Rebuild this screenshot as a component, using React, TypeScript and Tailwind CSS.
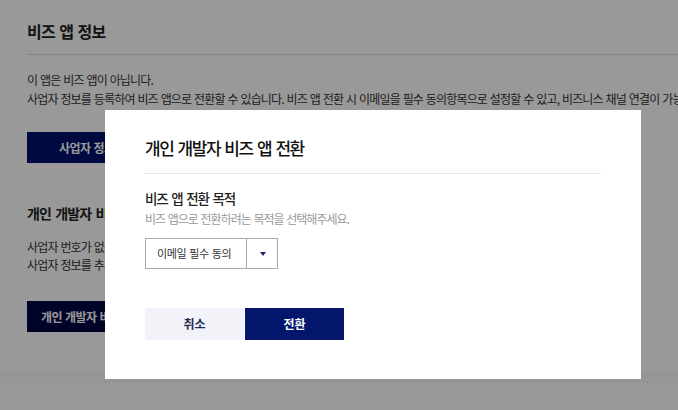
import React from "react";

const font = { fontFamily: '"Noto Sans CJK KR", "Noto Sans", sans-serif' };

export default function App() {
  return (
    <div
      className="relative w-[678px] h-[410px] overflow-hidden bg-white text-[#333]"
      style={font}
    >
      {/* Page */}
      <div className="flex flex-col h-[372px] pl-[27px] pt-[19px] whitespace-nowrap">
        <h2 className="text-[16px] leading-[24px] font-bold text-[#222] tracking-[-0.6px] [word-spacing:1px]">비즈 앱 정보</h2>
        <div className="mt-[11px] h-px bg-[#dcdcdc]" />
        <p className="mt-[15px] text-[12px] leading-[19px] tracking-[-0.85px] [word-spacing:1px]">이 앱은 비즈 앱이 아닙니다.</p>
        <p className="text-[12px] leading-[19px] tracking-[-0.85px] [word-spacing:1px]">
          사업자 정보를 등록하여 비즈 앱으로 전환할 수 있습니다. 비즈 앱 전환 시 이메일을 필수 동의항목으로 설정할 수 있고, 비즈니스 채널 연결이 가능합니다.
        </p>
        <div className="mt-[24px] flex">
          <button className="h-[31px] px-[32px] bg-[#00106b] text-white text-[12px] font-bold tracking-[-0.6px] [word-spacing:1px]">
            사업자 정보 등록
          </button>
        </div>
        <h3 className="mt-[40px] text-[14px] leading-[20px] font-bold text-[#222] tracking-[-0.9px] [word-spacing:2px]">개인 개발자 비즈 앱 전환</h3>
        <p className="mt-[15px] text-[12px] leading-[18px] tracking-[-0.85px] [word-spacing:1px]">사업자 번호가 없는 개인 개발자도 비즈 앱으로 전환할 수 있습니다.</p>
        <p className="text-[12px] leading-[18px] tracking-[-0.85px] [word-spacing:1px]">사업자 정보를 추후 등록하면 비즈니스 기능을 이용할 수 있습니다.</p>
        <div className="mt-[27px] flex">
          <button className="h-[31px] px-[14px] bg-[#000443] text-white text-[12px] font-bold tracking-[-0.6px] [word-spacing:1px]">
            개인 개발자 비즈 앱 전환
          </button>
        </div>
      </div>
      <div className="h-[11px] bg-[#f7f8f7]" />

      {/* Overlay */}
      <div className="absolute inset-0 bg-black/40" />

      {/* Modal */}
      <div className="absolute left-[105px] top-[110px] w-[536px] h-[269px] bg-white px-[40px] pt-[26px]">
        <div className="pb-[13px] border-b border-[#e5e5e5]">
          <h1 className="text-[17px] leading-[24px] font-medium text-[#111] tracking-[-1.5px] [word-spacing:2px]">개인 개발자 비즈 앱 전환</h1>
        </div>
        <h4 className="mt-[14px] text-[13.5px] leading-[20px] font-medium text-[#222] tracking-[-1.2px] [word-spacing:2px]">비즈 앱 전환 목적</h4>
        <p className="mt-[2px] text-[12px] leading-[18px] text-[#999] tracking-[-1px] [word-spacing:1px]">비즈 앱으로 전환하려는 목적을 선택해주세요.</p>
        <div className="mt-[10px] flex w-[133px] h-[31px] border border-[#a8a8a8]">
          <div className="flex-1 flex items-center pl-[11px] text-[11px] text-[#333] tracking-[-0.4px] [word-spacing:1px]">이메일 필수 동의</div>
          <div className="w-[31px] border-l border-[#a8a8a8] flex items-center justify-center">
            <svg width="6" height="4" viewBox="0 0 6 4" className="ml-[1px]">
              <polygon points="0,0 6,0 3,4" fill="#1a237e" />
            </svg>
          </div>
        </div>
        <div className="mt-[39px] flex gap-px">
          <button className="w-[99px] h-[32px] bg-[#f2f3f8] text-[#1f2a5c] text-[12px] font-bold">취소</button>
          <button className="w-[99px] h-[32px] bg-[#03166b] text-white text-[12px] font-bold">전환</button>
        </div>
      </div>
    </div>
  );
}
